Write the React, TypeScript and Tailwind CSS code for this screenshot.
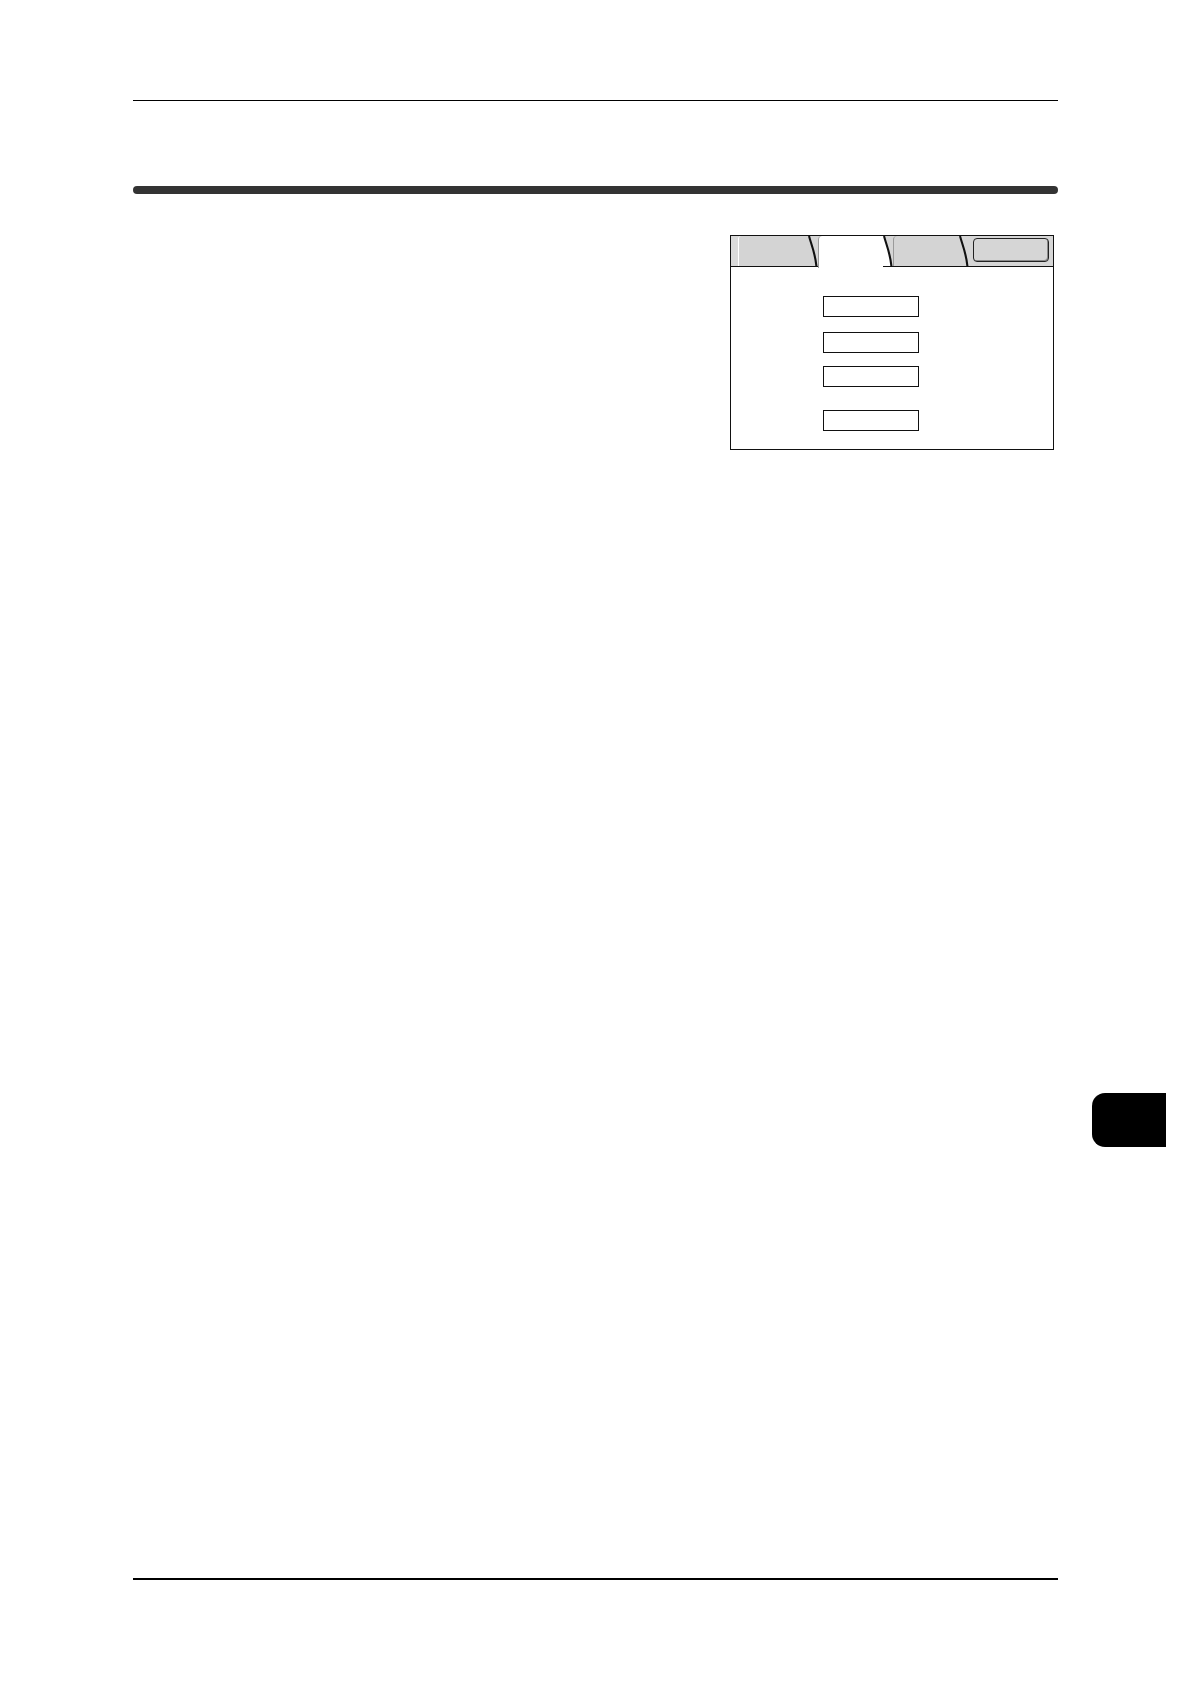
import React from 'react';

// curved right edge of a tab; left side filled with the tab colour
const TabEdge: React.FC<{ fill: string }> = ({ fill }) => (
  <svg width="10" height="30" viewBox="0 0 10 30" className="shrink-0 block">
    <path d="M0 0 L1 0 C3 8 7 16 8.4 30 L0 30 Z" fill={fill} />
    <path d="M1 0 C3 8 7 16 8.4 30" fill="none" stroke="#111" strokeWidth="2.1" />
  </svg>
);

const Field = () => <div className="w-[96px] h-[21px] border-[1.5px] border-[#111] bg-white" />;

const ScreenFigure = () => (
  <div className="w-[324px] h-[215px] border-[1.75px] border-[#111] bg-white flex flex-col">
    {/* tab strip */}
    <div className="flex items-start h-[31px] border-b-[1.75px] border-[#111] bg-[#d6d6d6]">
      <div className="w-[7px] h-[30px] bg-[#dadada]" />
      <div className="flex items-start">
        <div className="w-[70px] h-[30px] bg-[#d4d4d4] border-l border-white rounded-tl-[3px]" />
        <TabEdge fill="#d4d4d4" />
      </div>
      <div className="flex items-start relative z-10">
        <div className="w-[65px] h-[31.5px] bg-white border-l border-[#9a9a9a] rounded-tl-[4px]" />
        <TabEdge fill="#ffffff" />
      </div>
      <div className="flex items-start">
        <div className="w-[66px] h-[30px] bg-[#d4d4d4] border-l border-[#9a9a9a] rounded-tl-[4px]" />
        <TabEdge fill="#d4d4d4" />
      </div>
      <div className="flex-1 h-[30px] flex items-start pt-[1.5px] pl-[4px]">
        <div className="w-[76px] h-[24px] rounded-[4px] border-[1.5px] border-[#222] bg-[#d6d6d6] shadow-[inset_-1px_-1px_0_#8a8a8a]" />
      </div>
    </div>
    {/* field column */}
    <div className="flex flex-col pl-[92px] pt-[28.5px]">
      <Field />
      <div className="h-[15px]" />
      <Field />
      <div className="h-[13px]" />
      <Field />
      <div className="h-[23px]" />
      <Field />
    </div>
  </div>
);

export default function App() {
  return (
    <div className="w-[1190px] h-[1684px] bg-white flex flex-col">
      <div className="px-[133px] pr-[132px] flex flex-col">
        <div className="mt-[99.5px] h-[1.5px] bg-black" />
        <div className="mt-[85px] h-[7.5px] rounded-full bg-[#333333]" />
        <div className="mt-[41.5px] flex justify-end pr-[4.5px]">
          <ScreenFigure />
        </div>
      </div>

      {/* chapter thumb tab */}
      <div className="mt-[642.5px] flex justify-end pr-[24px]">
        <div className="w-[74px] h-[54px] bg-black rounded-l-[13px]" />
      </div>

      <div className="px-[133px] pr-[132px] mt-[431.5px]">
        <div className="h-[1.5px] bg-black" />
      </div>
    </div>
  );
}
